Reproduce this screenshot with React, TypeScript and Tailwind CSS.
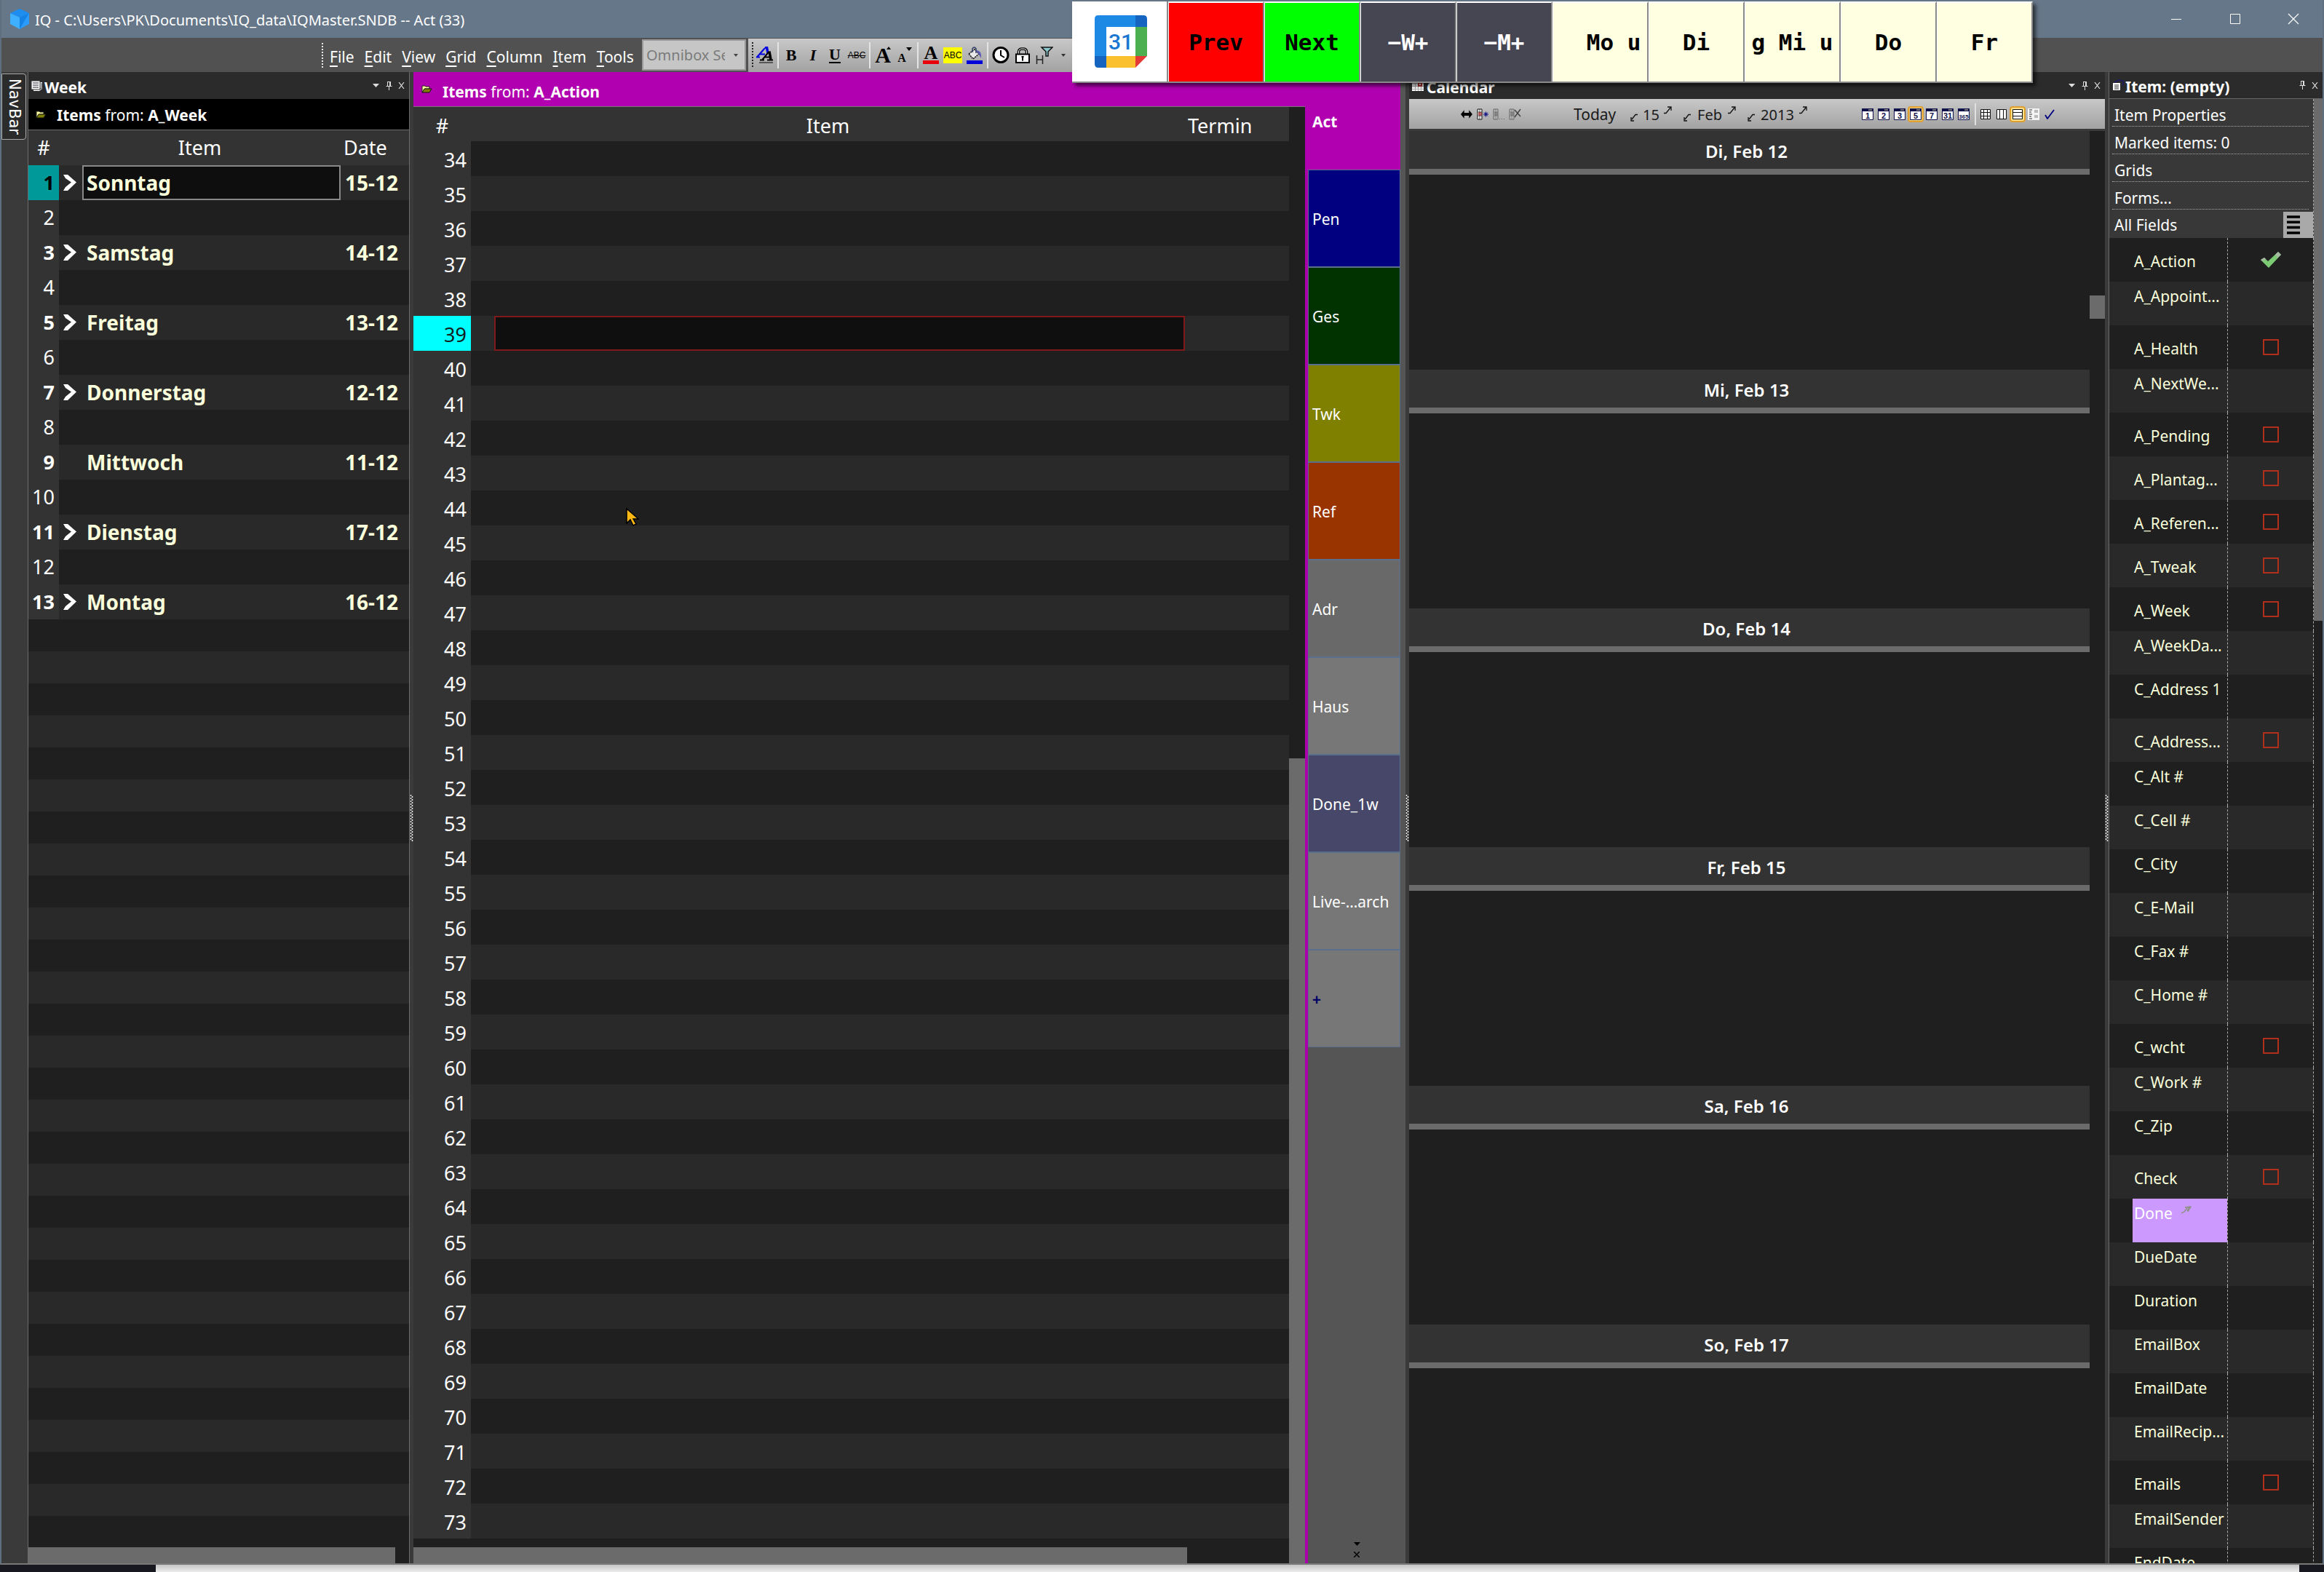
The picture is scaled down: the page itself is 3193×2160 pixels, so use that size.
import React from "react";

const NUM = "bg-[#333333] text-right pr-1.5 leading-11 pt-1";

const weekRows = [
  { n: 1, item: "Sonntag", date: "15-12", open: true },
  { n: 2 },
  { n: 3, item: "Samstag", date: "14-12", open: true },
  { n: 4 },
  { n: 5, item: "Freitag", date: "13-12", open: true },
  { n: 6 },
  { n: 7, item: "Donnerstag", date: "12-12", open: true },
  { n: 8 },
  { n: 9, item: "Mittwoch", date: "11-12", open: false },
  { n: 10 },
  { n: 11, item: "Dienstag", date: "17-12", open: true },
  { n: 12 },
  { n: 13, item: "Montag", date: "16-12", open: true },
];

const actionRows = Array.from({ length: 40 }, (_, i) => 34 + i);
const fillerRows = Array.from({ length: 29 }, (_, i) => i);

const tabs = [
  { label: "Pen", cls: "bg-[#000080] text-white" },
  { label: "Ges", cls: "bg-[#003300] text-white" },
  { label: "Twk", cls: "bg-[#808000] text-white" },
  { label: "Ref", cls: "bg-[#993300] text-white" },
  { label: "Adr", cls: "bg-[#696969] text-white" },
  { label: "Haus", cls: "bg-[#777777] text-white" },
  { label: "Done_1w", cls: "bg-[#474769] text-white" },
  { label: "Live-…arch", cls: "bg-[#777777] text-white" },
  { label: "+", cls: "bg-[#777777] text-[#000066] font-bold" },
];

const days = ["Di, Feb 12", "Mi, Feb 13", "Do, Feb 14", "Fr, Feb 15", "Sa, Feb 16", "So, Feb 17"];

type Field = { name: string; box?: boolean; checked?: boolean };
const fields: Field[] = [
  { name: "A_Action", box: true, checked: true },
  { name: "A_Appoint..." },
  { name: "A_Health", box: true },
  { name: "A_NextWe..." },
  { name: "A_Pending", box: true },
  { name: "A_Plantag...", box: true },
  { name: "A_Referen...", box: true },
  { name: "A_Tweak", box: true },
  { name: "A_Week", box: true },
  { name: "A_WeekDa..." },
  { name: "C_Address 1" },
  { name: "C_Address...", box: true },
  { name: "C_Alt #" },
  { name: "C_Cell #" },
  { name: "C_City" },
  { name: "C_E-Mail" },
  { name: "C_Fax #" },
  { name: "C_Home #" },
  { name: "C_wcht", box: true },
  { name: "C_Work #" },
  { name: "C_Zip" },
  { name: "Check", box: true },
  { name: "Done" },
  { name: "DueDate" },
  { name: "Duration" },
  { name: "EmailBox" },
  { name: "EmailDate" },
  { name: "EmailRecip..." },
  { name: "Emails", box: true },
  { name: "EmailSender" },
  { name: "EndDate" },
];

function Cube() {
  return (
    <svg width="26" height="28" viewBox="0 0 26 28" aria-hidden="true">
      <path d="M13 0 26 6 13 12 0 6Z" fill="#1d8df0" />
      <path d="M0 6 13 12V28L0 21Z" fill="#3fb0ff" />
      <path d="M26 6 13 12V28L26 21Z" fill="#2a9bfa" />
      <path d="M13 12 26 6 13 28Z" fill="#1583e6" />
    </svg>
  );
}

function Folder() {
  return (
    <svg width="15" height="11" viewBox="0 0 15 11" aria-hidden="true">
      <path d="M1 10V1h4l1 1h5v3H5Z" fill="#ffffa0" stroke="#222" strokeWidth="1" />
      <path d="M1 10 4 5h10l-3 5Z" fill="#808000" stroke="#111" strokeWidth="1" />
    </svg>
  );
}

function Pages() {
  return (
    <svg width="17" height="16" viewBox="0 0 17 16" aria-hidden="true">
      <path d="M4 3h12v9l-4 3H4Z" fill="#fff" />
      <path d="M1 1h12v12H1Z" fill="#fff" stroke="#333" />
      <path d="M3 4h8M3 7h8M3 10h8" stroke="#223" strokeWidth="1" />
      <path d="M15 4v8M13 12h2" stroke="#333" />
    </svg>
  );
}

function PanelButtons({ menu = true }: { menu?: boolean }) {
  return (
    <div className="flex items-center text-[#dddddd]">
      {menu && (
        <button aria-label="Panel menu" className="w-[18px]">
          <svg width="9" height="5" viewBox="0 0 9 5"><path d="M0 0h9L4.500 5Z" fill="currentColor" /></svg>
        </button>
      )}
      <button aria-label="Pin panel" className="w-[17px]">
        <svg width="9" height="12" viewBox="0 0 9 12">
          <path d="M2.500.500v6M6.500.500v6M2 .500h5M.500 6.500h8M4.500 7v5M5.500 1v5" fill="none" stroke="currentColor" />
        </svg>
      </button>
      <button aria-label="Close panel" className="w-[11px]">
        <svg width="9" height="9" viewBox="0 0 9 9"><path d="M1 0 8 9M8 0 1 9" stroke="currentColor" strokeWidth="1.200" /></svg>
      </button>
    </div>
  );
}

function Grip() {
  return (
    <svg width="5" height="64" viewBox="0 0 5 64" aria-hidden="true" className="shrink-0">
      <path d="M1.500 0v64" stroke="#eee" strokeWidth="1.500" strokeDasharray="2 2" />
      <path d="M3.500 2v62" stroke="#eee" strokeWidth="1.500" strokeDasharray="2 2" />
    </svg>
  );
}

function Splitter() {
  return (
    <div className="flex w-[5px] shrink-0 flex-col items-center justify-center bg-[#3a3a3a]">
      <Grip />
    </div>
  );
}

function Sep() {
  return <span className="mx-0.5 h-9 w-0.5 shrink-0 bg-[#e4e4e4]" />;
}

function Tool({ label, children }: { label: string; children: React.ReactNode }) {
  return (
    <button aria-label={label} className="flex h-11 w-[30px] shrink-0 items-center justify-center font-['Liberation_Serif',serif] text-[22px] leading-6 text-black">
      {children}
    </button>
  );
}

function FormatBar() {
  return (
    <div className="flex h-[46px] w-[450px] shrink-0 items-center bg-linear-to-b from-[#c8c8c8] to-[#a2a2a2] pl-1">
      <svg width="4" height="36" viewBox="0 0 4 36" aria-hidden="true"><path d="M2 0v36" stroke="#222" strokeWidth="2" strokeDasharray="2 2" /></svg>
      <Tool label="Font">
        <svg width="24" height="24" viewBox="0 0 24 24">
          <path d="M1 14.500 12 2M5 10.500h7M0 14.500h5" fill="none" stroke="#0000e0" strokeWidth="2" />
          <path d="M12 1h2.500l1.500 8" fill="none" stroke="#0000e0" strokeWidth="3.500" />
          <path d="M8 18.500 17.500 7M11 14.500h9M5 18.500h6M15 18.500h8" fill="none" stroke="#000" strokeWidth="2" />
          <path d="M18 6.500 20 18" fill="none" stroke="#000" strokeWidth="3.500" />
          <path d="M4 22h19" stroke="#000" />
        </svg>
      </Tool>
      <Sep />
      <Tool label="Bold"><b>B</b></Tool>
      <Tool label="Italic"><b><i>I</i></b></Tool>
      <Tool label="Underline"><b className="border-b-2 border-black leading-5">U</b></Tool>
      <Tool label="Strikethrough"><span className="font-['Liberation_Sans',sans-serif] text-[12px] line-through">ABC</span></Tool>
      <Sep />
      <Tool label="Grow font">
        <b className="text-[30px]">A</b>
        <svg width="6" height="4" viewBox="0 0 6 4" className="-ml-1.5 mb-5 shrink-0"><path d="M0 4h6L3 0Z" /></svg>
      </Tool>
      <Tool label="Shrink font">
        <b className="pt-2 text-[16px]">A</b>
        <svg width="8" height="5" viewBox="0 0 8 5" className="mb-4 shrink-0"><path d="M0 0h8L4 5Z" /></svg>
      </Tool>
      <Sep />
      <Tool label="Font colour">
        <span className="flex flex-col items-center"><b className="text-[26px] leading-5">A</b><i className="h-[5px] w-[22px] bg-red-600" /></span>
      </Tool>
      <Tool label="Highlight"><span className="bg-[#ffff00] px-px font-['Liberation_Sans',sans-serif] text-[12px] leading-[22px]">ABC</span></Tool>
      <Tool label="Fill colour">
        <svg width="24" height="24" viewBox="0 0 24 24">
          <path d="M4 10 12 4l6 6-8 7Z" fill="#e8e8e8" stroke="#111" strokeWidth="1.500" strokeDasharray="2 1" />
          <path d="M9 8V3q2.500-4 5 0v6" fill="none" stroke="#33406a" strokeWidth="1.500" />
          <path d="M14 5q8 0 7 11l-3-5Z" fill="#5a5ab0" />
          <path d="M1 19h22v5H1Z" fill="#0000d8" />
        </svg>
      </Tool>
      <Sep />
      <Tool label="Time">
        <svg width="24" height="25" viewBox="0 0 24 25">
          <circle cx="12" cy="12.500" r="10" fill="#fff" stroke="#000" strokeWidth="3" />
          <path d="M12 6v7l5 3" fill="none" stroke="#000" strokeWidth="2" />
        </svg>
      </Tool>
      <Tool label="Lock">
        <svg width="20" height="22" viewBox="0 0 20 22">
          <path d="M4.500 9V6q0-4 5.500-4t5.500 4v3" fill="none" stroke="#000" strokeWidth="3.500" />
          <path d="M4.500 9V6q0-4 5.500-4t5.500 4v3" fill="none" stroke="#fff" />
          <path d="M1 9.500h18V21H1Z" fill="#fff" stroke="#000" strokeWidth="2" />
          <path d="M10 12.500v6M8.500 13h3" stroke="#000" strokeWidth="2" />
        </svg>
      </Tool>
      <Tool label="Filter">
        <svg width="24" height="26" viewBox="0 0 24 26">
          <path d="M1.500 13v12M9.500 13v12M1.500 19h8" stroke="#222" strokeWidth="1.500" />
          <path d="M8 2h15l-6 6v6h-3V8Z" fill="#8fc9d0" stroke="#111" strokeWidth="1.500" />
        </svg>
      </Tool>
      <button aria-label="More" className="ml-2">
        <svg width="6" height="4" viewBox="0 0 6 4"><path d="M0 0h6L3 4Z" fill="#333" /></svg>
      </button>
    </div>
  );
}

function MenuBar() {
  const menus = [
    ["F", "ile"], ["E", "dit"], ["V", "iew"], ["G", "rid"], ["C", "olumn"], ["I", "tem"], ["T", "ools"],
  ];
  return (
    <div className="flex h-[47px] shrink-0 items-center bg-[#515151] pl-[440px]">
      <svg width="4" height="34" viewBox="0 0 4 34" aria-hidden="true"><path d="M1 0v34" stroke="#e8e8e8" strokeDasharray="2 2" strokeWidth="2" /></svg>
      <nav className="flex w-[436px] shrink-0 pt-1 text-[21px] text-white">
        {menus.map(([a, b]) => (
          <button key={b} className="px-[7px] leading-8"><span className="underline underline-offset-4">{a}</span>{b}</button>
        ))}
      </nav>
      <div className="mr-[3px] flex h-[43px] w-[143px] shrink-0 items-center border-2 border-[#999999] bg-[#c6c6c6]">
        <input aria-label="Omnibox" placeholder="Omnibox Search" className="w-[112px] bg-transparent pl-1 text-[20px] text-[#7b7b7b] outline-none placeholder:text-[#7b7b7b]" />
        <svg width="6" height="4" viewBox="0 0 6 4" aria-hidden="true" className="ml-3"><path d="M0 0h6L3 4Z" fill="#444" /></svg>
      </div>
      <FormatBar />
    </div>
  );
}

function TitleBar() {
  return (
    <header className="flex h-[52px] shrink-0 items-center bg-[#667789] pl-3 text-white">
      <Cube />
      <h1 className="ml-2 grow pt-1 text-[20px]">IQ - C:\Users\PK\Documents\IQ_data\IQMaster.SNDB -- Act (33)</h1>
      <button aria-label="Minimize" className="flex w-20 justify-center"><svg width="16" height="16" viewBox="0 0 16 16"><path d="M1 8.500h14" stroke="#fff" /></svg></button>
      <button aria-label="Maximize" className="flex w-[81px] justify-center"><svg width="16" height="16" viewBox="0 0 16 16" fill="none"><path d="M1.500 1.500h13v13h-13Z" stroke="#fff" /></svg></button>
      <button aria-label="Close" className="flex w-20 justify-center"><svg width="16" height="16" viewBox="0 0 16 16"><path d="M1 1 15 15M15 1 1 15" stroke="#fff" strokeWidth="1.200" /></svg></button>
    </header>
  );
}

function WeekPanel() {
  return (
    <section className="flex w-[525px] shrink-0 flex-col overflow-hidden border-x border-[#6b6b6b] bg-[#1f1f1f]">
      <div className="flex h-[37px] shrink-0 items-center bg-[#2b2b2b] pr-1 pl-[3px] text-white">
        <Pages />
        <h2 className="ml-0.5 grow pt-1 text-[21px] leading-8 font-bold">Week</h2>
        <PanelButtons />
      </div>
      <div className="flex h-[42px] shrink-0 items-center bg-black pl-[10px] text-[21px] text-white">
        <Folder />
        <p className="ml-3.5 pt-1"><b>Items</b> from: <b>A_Week</b></p>
      </div>
      <table className="w-full table-fixed border-collapse text-[27px]">
        <colgroup><col className="w-[42px]" /><col className="w-8" /><col /><col className="w-[94px]" /></colgroup>
        <thead>
          <tr className="h-12 border-t border-[#6b6b6b] bg-[#333333] text-white">
            <th className="font-normal">#</th>
            <th colSpan={2} className="font-normal">Item</th>
            <th className="pl-1 text-left font-normal">Date</th>
          </tr>
        </thead>
        <tbody>
          {weekRows.map((r) => (
            <tr key={r.n} className="h-12 font-bold text-[#faffdc] odd:bg-[#292929] even:bg-[#1f1f1f]">
              <td className={r.n === 1 ? "bg-[#009999] pr-1.5 text-right leading-12 text-black" : r.item ? "bg-[#333333] pr-1.5 text-right leading-12 text-white" : "bg-[#333333] pr-1.5 text-right leading-12 font-normal text-white"}>{r.n}</td>
              <td className="p-0">
                {r.open && (
                  <svg width="18" height="22" viewBox="0 0 18 22" aria-hidden="true" className="ml-1.5"><path d="M0 0h6l12 10.500L6 22H0l3-5 8-6.500L3 5Z" fill="#fff" /></svg>
                )}
              </td>
              <td className="p-0 text-[28px]">
                {r.n === 1 ? (
                  <div className="h-12 border-2 border-[#888888] bg-[#0e0e0e] pl-1 leading-11">{r.item}</div>
                ) : (
                  <div className="pl-1.5 leading-12">{r.item}</div>
                )}
              </td>
              <td className="p-0 pl-1.5 text-[28px] leading-12">{r.date}</td>
            </tr>
          ))}
        </tbody>
      </table>
      <div className="min-h-0 grow overflow-hidden">
        {fillerRows.map((i) => (
          <div key={i} className="h-11 odd:bg-[#1f1f1f] even:bg-[#292929]" />
        ))}
      </div>
      <div className="h-[22px] shrink-0 bg-[#1f1f1f] pr-[19px]"><div className="h-full bg-[#6b6b6b]" /></div>
    </section>
  );
}

function ActionPanel() {
  return (
    <section className="flex min-w-0 flex-[1363] bg-[#555555]">
      <div className="flex min-w-0 grow flex-col">
        <div className="flex h-12 shrink-0 items-center border-b border-[#777777] bg-[#b000b0] pl-[11px] text-[21px] text-white">
          <Folder />
          <p className="ml-3.5 pt-2"><b>Items</b> from: <b>A_Action</b></p>
        </div>
        <div className="flex min-h-0 grow bg-[#1f1f1f]">
          <div className="flex min-w-0 grow flex-col">
            <table className="w-full table-fixed border-collapse text-[27px] text-white">
              <colgroup><col className="w-[79px]" /><col className="w-8" /><col /><col className="w-[143px]" /></colgroup>
              <thead>
                <tr className="h-[47px] bg-[#333333] leading-10">
                  <th className="pt-1 font-normal">#</th>
                  <th colSpan={2} className="pt-1 font-normal">Item</th>
                  <th className="pt-1 pl-1 text-left font-normal">Termin</th>
                </tr>
              </thead>
              <tbody>
                {actionRows.map((n) => (
                  <tr key={n} className="h-12 odd:bg-[#1f1f1f] even:bg-[#292929]">
                    <td className={n === 39 ? "bg-[#00ffff] pt-1 pr-1.5 text-right leading-11 text-[#102020]" : NUM}>{n}</td>
                    <td />
                    <td className="p-0">{n === 39 && <div className="h-12 border-2 border-[#801a1a] bg-[#0f0f0f]" />}</td>
                    <td />
                  </tr>
                ))}
              </tbody>
            </table>
            <div className="mt-auto h-[22px] shrink-0 pr-[140px]"><div className="h-full bg-[#6b6b6b]" /></div>
          </div>
          <div className="flex w-[22px] shrink-0 flex-col justify-end"><div className="h-[1106px] bg-[#6b6b6b]" /></div>
        </div>
      </div>
      <div className="flex w-[138px] shrink-0 flex-col">
        <button className="h-[134px] w-[131px] shrink-0 bg-[#b000b0] pt-1 pl-2.5 text-left text-[21px] font-bold text-white">Act</button>
        <div className="flex min-h-0 grow flex-col border-l-4 border-[#aa00aa]">
          {tabs.map((t) => (
            <button key={t.label} className={"h-[134px] w-[127px] shrink-0 border border-[#5a6f8c] pt-1 pl-[5px] text-left text-[21px] " + t.cls}>{t.label}</button>
          ))}
          <div className="mt-auto flex flex-col items-center gap-2 pb-2">
            <button aria-label="Tab menu"><svg width="9" height="5" viewBox="0 0 9 5"><path d="M0 0h9L4.500 5Z" /></svg></button>
            <button aria-label="Close tab"><svg width="8" height="8" viewBox="0 0 8 8"><path d="M0 0 8 8M8 0 0 8" stroke="#000" strokeWidth="1.500" /></svg></button>
          </div>
        </div>
      </div>
    </section>
  );
}

function Back() {
  return <svg width="11" height="11" viewBox="0 0 11 11"><path d="M10 1.500H7L2 8M1 5v5h4" fill="none" stroke="#111" strokeWidth="1.300" /></svg>;
}
function Fwd() {
  return <svg width="11" height="11" viewBox="0 0 11 11"><path d="M0 9.500h3L9 2M5 1h5v5" fill="none" stroke="#111" strokeWidth="1.300" /></svg>;
}

function Stepper({ label, cls }: { label: string; cls: string }) {
  return (
    <div className={"flex shrink-0 items-center " + cls}>
      <button aria-label={"Previous " + label} className="mt-2"><Back /></button>
      <span className="grow text-center">{label}</span>
      <button aria-label={"Next " + label} className="mb-3"><Fwd /></button>
    </div>
  );
}

function CalIcon({ kind }: { kind: "new" | "list" | "del" }) {
  const c = kind === "new" ? "#111" : "#666";
  return (
    <svg width="17" height="16" viewBox="0 0 17 16">
      <path d="M1 1h6v14H1Z" fill={kind === "new" ? "#fff" : "#bbb"} stroke={c} />
      <path d="M1 5h6M1 10h6M4 1v14" stroke={c} strokeWidth=".7" />
      <path d="M3 6h3v3H3Z" fill="none" stroke={kind === "new" ? "#a00" : c} />
      {kind === "new" && <path d="M12.500 4.500v7M9 8h7M10 5.500l5 5M15 5.500l-5 5" stroke="#000080" />}
      {kind === "list" && <path d="M9 14.500h8" stroke={c} strokeDasharray="1 2" />}
      {kind === "del" && <path d="M8 2l8 9M16 1 8 12" stroke="#444" strokeWidth="1.500" />}
    </svg>
  );
}

function DayIcon({ n }: { n: string }) {
  return (
    <svg width="16" height="16" viewBox="0 0 16 16">
      <path d="M.500.500h15v15H.500Z" fill="#fff" stroke="#10104a" />
      <path d="M0 0h16v4H0Z" fill="#10104a" />
      <path d="M9 1h5v2H9Z" fill="#777" />
      <text x="8" y="14" textAnchor="middle" fontSize={n.length === 3 ? "8" : "11"} fontWeight="bold" fill="#10104a" fontFamily="Liberation Sans">{n}</text>
    </svg>
  );
}

function GridIcon({ d }: { d: string }) {
  return (
    <svg width="14" height="14" viewBox="0 0 14 14">
      <path d="M.500.500h13v13H.500Z" fill="#fff" stroke="#111" />
      <path d={d} fill="none" stroke="#111" />
    </svg>
  );
}

function CalButton({ label, on, children }: { label: string; on?: boolean; children: React.ReactNode }) {
  return (
    <button
      aria-label={label}
      className={on ? "flex h-[22px] w-[22px] shrink-0 items-center justify-center rounded border-2 border-[#e0a030] bg-[#ffe08a]" : "flex h-[22px] w-[22px] shrink-0 items-center justify-center"}
    >
      {children}
    </button>
  );
}

function CalendarPanel() {
  return (
    <section className="flex min-w-0 flex-[956] flex-col overflow-hidden bg-[#1f1f1f]">
      <div className="flex h-[37px] shrink-0 items-center bg-[#2b2b2b] pr-1 pl-1 text-white">
        <svg width="16" height="14" viewBox="0 0 16 14" aria-hidden="true">
          <path d="M0 0h16v14H0Z" fill="#fff" />
          <path d="M0 3.500h16M0 7.500h16M0 11.500h16M4.500 0v14M8.500 0v14M12.500 0v14" stroke="#aaa" />
          <path d="M9 3h4v4H9Z" fill="none" stroke="#a00" strokeWidth="1.500" />
        </svg>
        <h2 className="ml-1 grow pt-1 text-[21px] leading-8 font-bold">Calendar</h2>
        <PanelButtons />
      </div>
      <div className="flex h-[41px] shrink-0 items-center bg-linear-to-b from-[#c8c8c8] to-[#a2a2a2] pl-[68px] text-[20px] text-[#1a1a1a]">
        <div className="flex">
          <CalButton label="Fit width"><svg width="16" height="12" viewBox="0 0 17 12"><path d="M0 6 5 0v4h7V0l5 6-5 6V8H5v4Z" /></svg></CalButton>
          <CalButton label="New entry"><CalIcon kind="new" /></CalButton>
          <CalButton label="Entry details"><CalIcon kind="list" /></CalButton>
          <CalButton label="Delete entry"><CalIcon kind="del" /></CalButton>
        </div>
        <button className="ml-[70px] w-[78px] pt-0.5 text-left text-[21px]">Today</button>
        <Stepper label="15" cls="w-[57px] pt-0.5" />
        <Stepper label="Feb" cls="ml-4 w-[72px] pt-0.5" />
        <Stepper label="2013" cls="ml-4 w-[82px] pt-0.5" />
        <div className="ml-[72px] flex">
          {["1", "2", "3", "5", "7", "31", "365"].map((n) => (
            <CalButton key={n} label={n + " days"} on={n === "5"}><DayIcon n={n} /></CalButton>
          ))}
        </div>
        <span className="mr-0.5 ml-1 h-[30px] w-0.5 bg-[#e0e0e0]" />
        <CalButton label="Grid"><GridIcon d="M0 4.500h14M0 9.500h14M4.500 0v14M9.500 0v14" /></CalButton>
        <CalButton label="Columns"><GridIcon d="M4.500 0v14M9.500 0v14" /></CalButton>
        <CalButton label="Rows" on><GridIcon d="M0 4.500h14M0 9.500h14" /></CalButton>
        <CalButton label="Agenda">
          <svg width="16" height="16" viewBox="0 0 16 16"><path d="M0 0h16v16H0Z" fill="#f4f4f4" /><path d="M2 2h4M2 5h3M2 8h4M2 11h3M2 14h4" stroke="#333" /><path d="M9 2h5v4H9ZM9 9h5v4H9Z" fill="#bbb" /></svg>
        </CalButton>
        <CalButton label="Done"><svg width="14" height="14" viewBox="0 0 14 14"><path d="M1 8 4 13 13 1" fill="none" stroke="#000080" strokeWidth="1.800" /></svg></CalButton>
      </div>
      <div className="h-[3px] shrink-0 bg-[#3a3a3a]" />
      <div className="flex min-h-0 grow">
        <div className="min-w-0 grow">
          {days.map((d) => (
            <article key={d} className="h-[328px]">
              <h3 className="h-[60px] border-b-8 border-[#6b6b6b] bg-[#333333] pt-0.5 pr-2 text-center text-[24px] leading-[52px] font-semibold text-white">{d}</h3>
            </article>
          ))}
        </div>
        <div className="w-[21px] shrink-0 pt-[226px]"><div className="h-8 bg-[#6b6b6b]" /></div>
      </div>
    </section>
  );
}

function FieldRow({ f, i }: { f: Field; i: number }) {
  const id = "field-" + i;
  const done = f.name === "Done";
  return (
    <tr className="h-[60px] odd:bg-[#1f1f1f] even:bg-[#292929]">
      <td className="h-[60px] border-r border-dashed border-[#aaaaaa] py-0 pr-0 pl-8 align-top">
        <div className={done ? "flex h-[60px] bg-[#cc99ff] pl-0.5 text-white" : f.box ? "h-[60px] pt-3 pl-0.5 text-[#faffdc]" : "h-[60px] pl-0.5 text-[#faffdc]"}>
          <label htmlFor={id} className="block pt-1 leading-8 whitespace-nowrap">{f.name}</label>
          {done && (
            <svg width="14" height="12" viewBox="0 0 14 12" aria-hidden="true" className="mt-2.5 ml-3"><path d="M0 10 4 8 8 3M5 2l8-1-4 7M8 7l3-6" fill="none" stroke="#88907a" strokeWidth="1.300" /></svg>
          )}
        </div>
      </td>
      <td className="border-r border-dashed border-[#aaaaaa] p-0">
        {f.box ? (
          <span className="relative flex justify-center pl-0.5">
            <input
              id={id}
              type="checkbox"
              defaultChecked={f.checked}
              className="h-[22px] w-[22px] appearance-none border-2 border-[#b0301c] checked:border-transparent"
            />
            {f.checked && (
              <svg width="28" height="22" viewBox="0 0 28 22" aria-hidden="true" className="pointer-events-none absolute">
                <path d="M0 11 5 8l5 5L24 0l4 4L11 22Z" fill="#7ccb74" />
                <path d="M0 11 5 8l2 2-4 3ZM24 0l4 4-5 4-3-4Z" fill="#a9b8a4" />
              </svg>
            )}
          </span>
        ) : (
          <input id={id} type="text" className="h-8 w-full bg-transparent px-2 outline-none" />
        )}
      </td>
    </tr>
  );
}

function ItemPanel() {
  return (
    <section className="flex w-[294px] shrink-0 flex-col overflow-hidden border-l border-[#6b6b6b] bg-[#1f1f1f] text-white">
      <div className="flex h-[37px] shrink-0 items-center border-b border-[#666666] bg-[#2b2b2b] pr-1 pl-1">
        <svg width="16" height="16" viewBox="0 0 16 16" aria-hidden="true">
          <path d="M1 5h10v10H1Z" fill="#fff" /><path d="M3 8h6M3 10.500h6M3 13h6" stroke="#222" />
          <path d="M3 4 9 1l6 1v7" fill="none" stroke="#1c1c66" strokeWidth="1.500" />
        </svg>
        <h2 className="ml-0.5 grow pt-1 text-[21px] leading-8 font-bold">Item: (empty)</h2>
        <PanelButtons menu={false} />
      </div>
      <div className="flex min-h-0 grow overflow-hidden">
        <div className="w-[281px] shrink-0">
          <div className="border-r border-dashed border-[#aaaaaa] bg-[#383838] text-[21px]">
            {["Item Properties", "Marked items: 0", "Grids", "Forms..."].map((t) => (
              <button key={t} className="block h-[38px] w-full pr-1.5 pl-1 text-left">
                <span className="block h-[38px] border-b border-dotted border-[#aaaaaa] pt-1 pl-[3px] leading-9">{t}</span>
              </button>
            ))}
            <div className="flex h-[39px] items-end justify-between">
              <span className="pl-[7px] leading-9">All Fields</span>
              <button aria-label="Field list" className="h-9 w-[41px] bg-[#a9a9a9] pl-[5px]">
                <svg width="18" height="28" viewBox="0 0 18 28"><path d="M0 3h18M0 10.300h18M0 17.600h18M0 25h18" stroke="#000" strokeWidth="3.500" /></svg>
              </button>
            </div>
          </div>
          <table className="w-full table-fixed border-collapse text-[21px]">
            <colgroup><col className="w-[162px]" /><col /></colgroup>
            <tbody>{fields.map((f, i) => <FieldRow key={i} f={f} i={i} />)}</tbody>
          </table>
        </div>
        <div className="grow"><div className="h-[717px] bg-[#6b6b6b]" /></div>
      </div>
    </section>
  );
}

function GoogleCalendar() {
  return (
    <svg width="72" height="72" viewBox="0 0 72 72" aria-hidden="true">
      <path d="M5 0h51v16H16v40H0V5Q0 0 5 0Z" fill="#1e88e5" />
      <path d="M56 0h11q5 0 5 5v11H56ZM0 56h16v16H5q-5 0-5-5Z" fill="#1565c0" />
      <path d="M56 16h16v40H56Z" fill="#4caf50" />
      <path d="M16 56h40v16H16Z" fill="#fbc02d" />
      <path d="M56 56h16L56 72Z" fill="#e53935" />
      <text x="36" y="47" textAnchor="middle" fontSize="30" fontWeight="500" fontFamily="Roboto, sans-serif" fill="#1976d2">31</text>
    </svg>
  );
}

function QuickBar() {
  const items = [
    { t: "Prev", c: "bg-[#ff0000] text-black" },
    { t: "Next", c: "bg-[#00ff00] text-black" },
    { t: "−W+", c: "bg-[#464653] text-white" },
    { t: "−M+", c: "bg-[#464653] text-white" },
    { t: "  Mo u", c: "bg-[#ffffe1] text-black" },
    { t: "Di", c: "bg-[#ffffe1] text-black" },
    { t: "g Mi u", c: "bg-[#ffffe1] text-black" },
    { t: "Do", c: "bg-[#ffffe1] text-black" },
    { t: "Fr", c: "bg-[#ffffe1] text-black" },
  ];
  return (
    <div className="absolute top-0.5 left-[1473px] flex h-[112px] border-b-2 border-[#8a8a8a] shadow-[4px_4px_5px_rgba(0,0,0,0.6)]">
      <button aria-label="Google Calendar" className="flex w-[132px] items-center justify-center border-r-2 border-[#8a8a8a] bg-white pl-1"><GoogleCalendar /></button>
      {items.map((b) => (
        <button key={b.t} className={"w-[132px] border-t-2 border-r-2 border-l border-t-white border-r-[#8a8a8a] border-l-white text-center font-['DejaVu_Sans_Mono',monospace] text-[31px] font-bold whitespace-pre " + b.c}>{b.t}</button>
      ))}
    </div>
  );
}

export default function App() {
  return (
    <div className="relative flex h-screen w-full flex-col overflow-hidden bg-[#3a3a3a] font-['Noto_Sans',sans-serif]">
      <div className="flex min-h-0 grow flex-col border-x-2 border-b-2 border-x-[#5f6f80] border-b-[#777777]">
        <TitleBar />
        <MenuBar />
        <main className="flex min-h-0 grow">
          <aside className="w-9 shrink-0 pt-0.5">
            <button className="flex h-[91px] w-[34px] items-center justify-center rounded-r border border-[#aaaaaa] bg-[#2b2b2b] font-['DejaVu_Sans',sans-serif] text-[21px] text-white [writing-mode:vertical-rl]">NavBar</button>
          </aside>
          <WeekPanel />
          <Splitter />
          <ActionPanel />
          <Splitter />
          <CalendarPanel />
          <Splitter />
          <ItemPanel />
        </main>
      </div>
      <footer className="flex h-2.5 shrink-0 bg-[#181820]">
        <div className="mr-[34px] ml-[214px] grow bg-linear-to-b from-[#c4c4c4] to-[#ececec]" />
      </footer>
      <QuickBar />
      <svg width="18" height="26" viewBox="0 0 18 26" aria-hidden="true" className="absolute top-[698px] left-[860px]">
        <path d="M1 1v20l5-5 4 8 4-2-4-7h7Z" fill="#fdb813" stroke="#000" strokeWidth="1.500" />
      </svg>
    </div>
  );
}
